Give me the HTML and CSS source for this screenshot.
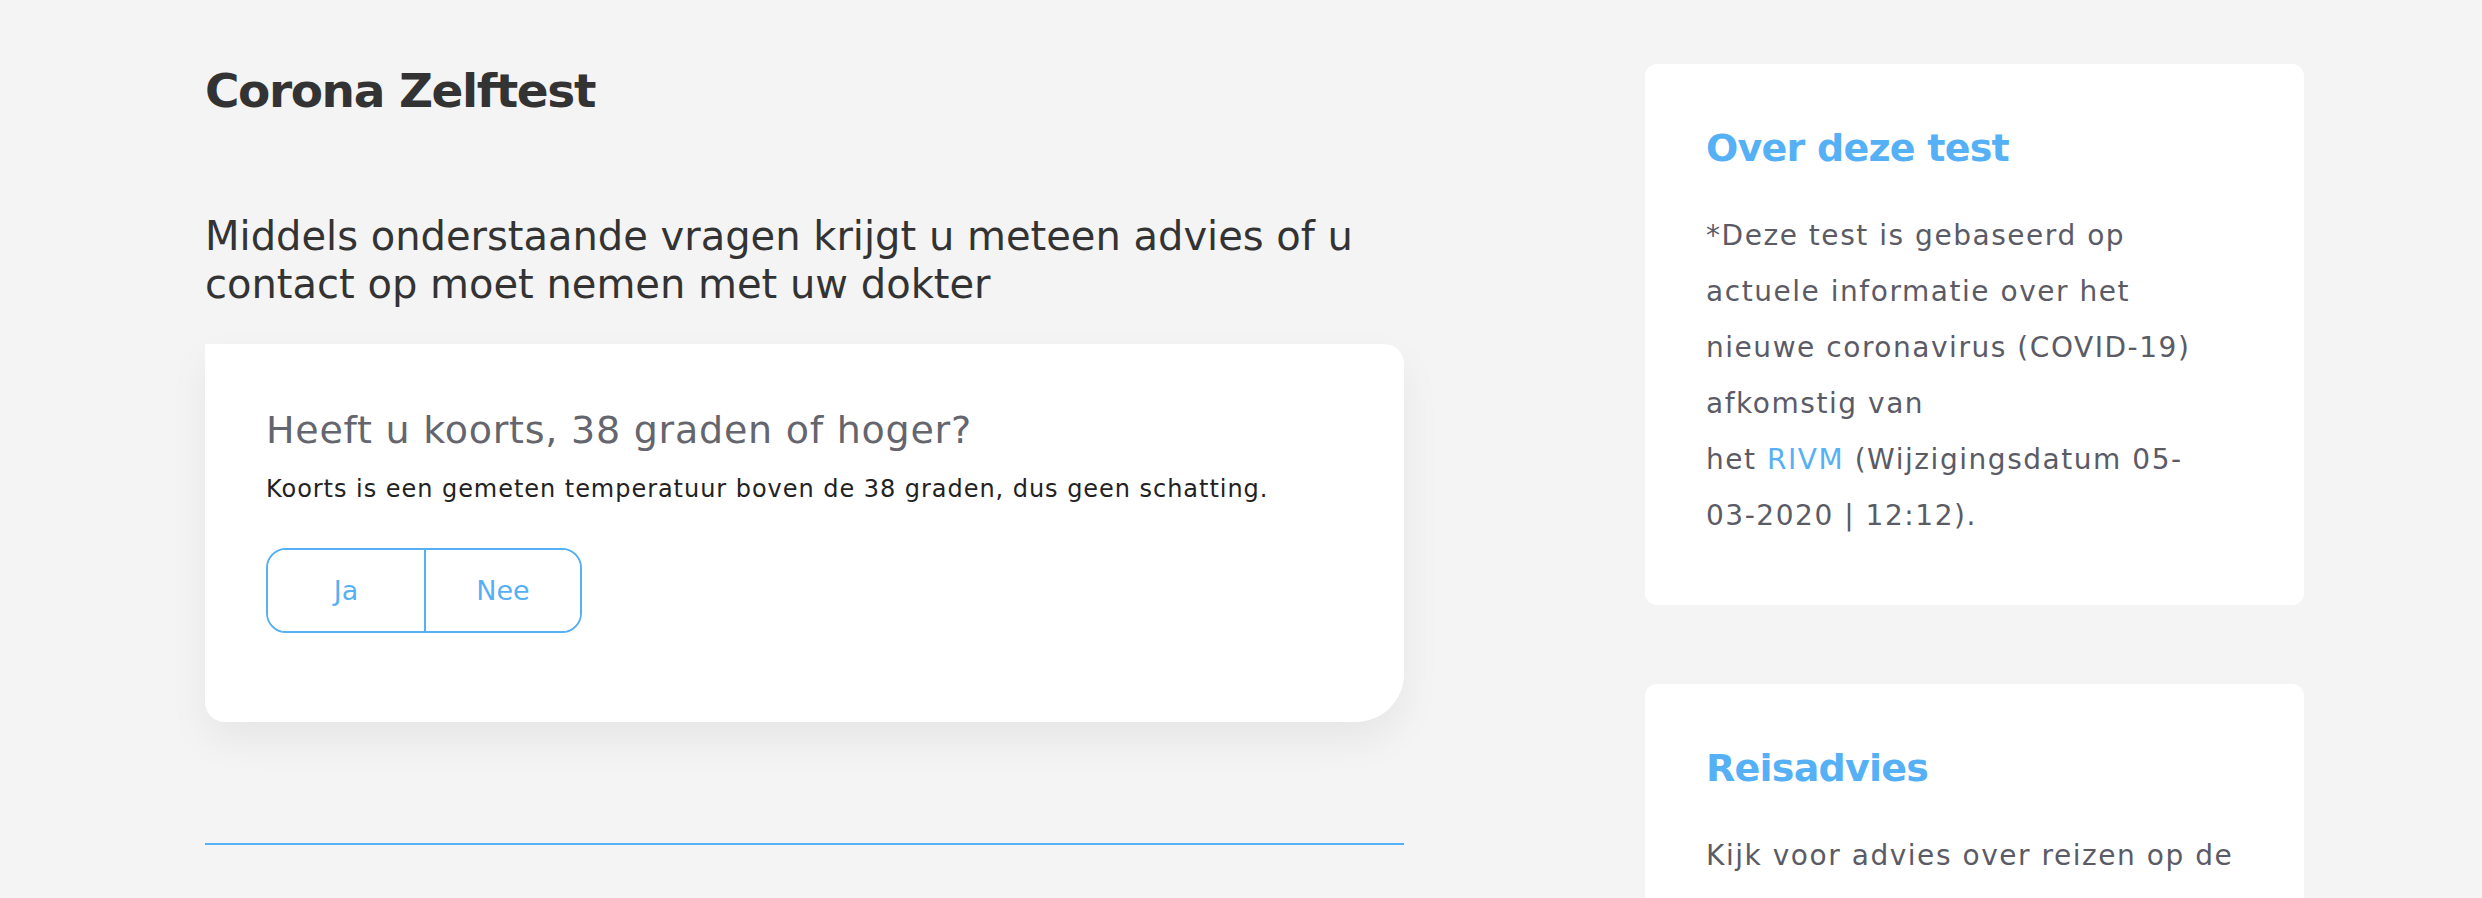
FILE: index.html
```html
<!DOCTYPE html>
<html>
<head>
    <meta charset="UTF-8">
    <title>Corona Zelftest</title>
    <link rel="stylesheet" href="styles.css">
</head>
<body>
    <div class="page">
        <main class="main">
            <h1 class="title">Corona Zelftest</h1>
            <p class="intro">Middels onderstaande vragen krijgt u meteen advies of u contact op moet nemen met uw dokter</p>

            <section class="question-card">
                <h2 class="question">Heeft u koorts, 38 graden of hoger?</h2>
                <p class="hint">Koorts is een gemeten temperatuur boven de 38 graden, dus geen schatting.</p>
                <div class="answers">
                    <button type="button">Ja</button>
                    <button type="button">Nee</button>
                </div>
            </section>

            <hr class="divider">
        </main>

        <aside class="sidebar">
            <div class="info-card">
                <h3>Over deze test</h3>
                <p>*Deze test is gebaseerd op actuele informatie over het nieuwe coronavirus (COVID-19) afkomstig van<br>het <a href="#">RIVM</a> (Wijzigingsdatum 05-03&#8209;2020 | 12:12).</p>
            </div>
            <div class="info-card">
                <h3>Reisadvies</h3>
                <p>Kijk voor advies over reizen op de <a href="#">website van de Rijksoverheid</a>.</p>
            </div>
        </aside>
    </div>
</body>
</html>
```

FILE: styles.css
```css
body {
    background: #f4f4f4;
    font-family: "DejaVu Sans", sans-serif;
    margin: 0;
    color: #333;
}
.page {
    display: grid;
    grid-template-columns: 1199px 659px;
    column-gap: 241px;
    padding: 61px 0 0 205px;
}

.title { font-size: 47px; line-height: 60px; font-weight: bold; letter-spacing: -0.03em; margin: 0; color: #333; }
.intro { font-size: 40px; line-height: 48px; margin: 91px 0 36px; color: #333; }

.question-card {
    background: #fff;
    padding: 63px 61px 89px;
    border-radius: 0 20px 48px 20px;
    box-shadow: 0 18px 40px rgba(0,0,0,0.06);
}
.question { font-size: 38px; line-height: 46px; font-weight: normal; letter-spacing: 0.02em; color: #65656e; margin: 0; }
.hint { font-size: 24px; line-height: 36px; letter-spacing: 0.04em; color: #222; margin: 18px 0 41px; }

.answers {
    display: inline-flex;
    border: 2px solid #56b0f5;
    border-radius: 20px;
    overflow: hidden;
}
.answers button {
    width: 156px; height: 81px;
    background: #fff; border: none;
    font-family: inherit; font-size: 27px; color: #56b0f5;
    cursor: pointer;
}
.answers button + button { border-left: 2px solid #56b0f5; }

.divider { border: none; height: 2px; background: #56b0f5; margin: 121px 0 0; }

.sidebar { margin-top: 3px; }
.info-card {
    background: #fff;
    border-radius: 12px;
    padding: 60px 61px 61px;
    margin-bottom: 79px;
}
.info-card h3 { font-size: 38px; line-height: 48px; letter-spacing: -0.02em; color: #56b0f5; margin: 0 0 36px; }
.info-card p { font-size: 28px; line-height: 56px; color: #5b5b66; margin: 0; letter-spacing: 0.055em; }
.info-card a { color: #56b0f5; text-decoration: none; }
```
